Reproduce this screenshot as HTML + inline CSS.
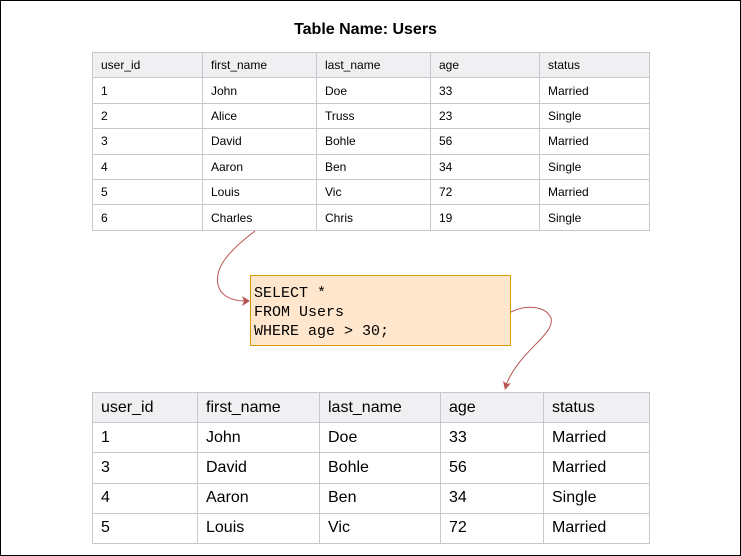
<!DOCTYPE html>
<html><head><style>
body{margin:0;width:741px;height:556px;position:relative;background:#fff;font-family:"Liberation Sans",Arial,sans-serif;overflow:hidden}
.frame{position:absolute;left:0;top:0;width:739px;height:554px;border:1px solid #000}
h1{position:absolute;top:21px;left:0;width:731px;text-align:center;margin:0;font-size:16px;font-weight:bold}
table{position:absolute;border-collapse:collapse;color:#000}
td{border:1px solid #c8c8cc;padding:0 0 0 8px;vertical-align:middle}
tr:first-child td{background:#f0f0f2}
#t1{left:92px;top:52px;font-size:12px}
#t1 td{height:24.4px}
#t2{left:92px;top:392px;font-size:16px}
#t2 td{height:29.2px}
.box{position:absolute;left:250px;top:275px;background:#ffe6cc;border:1px solid #d79b00;font-family:"Liberation Mono",monospace;font-size:15px;line-height:19px;padding:8px 0 0 3px;box-sizing:border-box;width:261px;height:71px}
svg{position:absolute;left:0;top:0}
</style></head><body>
<div class="frame"></div>
<h1>Table Name: Users</h1>
<table id="t1">
<tr><td style="width:101px">user_id</td><td style="width:105px">first_name</td><td style="width:105px">last_name</td><td style="width:100px">age</td><td style="width:101px">status</td></tr>
<tr><td>1</td><td>John</td><td>Doe</td><td>33</td><td>Married</td></tr>
<tr><td>2</td><td>Alice</td><td>Truss</td><td>23</td><td>Single</td></tr>
<tr><td>3</td><td>David</td><td>Bohle</td><td>56</td><td>Married</td></tr>
<tr><td>4</td><td>Aaron</td><td>Ben</td><td>34</td><td>Single</td></tr>
<tr><td>5</td><td>Louis</td><td>Vic</td><td>72</td><td>Married</td></tr>
<tr><td>6</td><td>Charles</td><td>Chris</td><td>19</td><td>Single</td></tr>
</table>
<div class="box">SELECT *<br>FROM Users<br>WHERE age &gt; 30;</div>
<svg width="741" height="556">
<path d="M255 231 C230 250 210 270 220 290 C225 298 235 301 246 301" fill="none" stroke="#b85450" stroke-width="1"/>
<path d="M250 301 L242 296 L244 301 L242 306 Z" fill="#b85450"/>
<path d="M511 312 C525 305 545 305 551 318 C555 335 520 350 506 385" fill="none" stroke="#b85450" stroke-width="1"/>
<path d="M505 390 L503 381 L507 384 L511 383 Z" fill="#b85450"/>
</svg>
<table id="t2">
<tr><td style="width:96px">user_id</td><td style="width:113px">first_name</td><td style="width:112px">last_name</td><td style="width:94px">age</td><td style="width:97px">status</td></tr>
<tr><td>1</td><td>John</td><td>Doe</td><td>33</td><td>Married</td></tr>
<tr><td>3</td><td>David</td><td>Bohle</td><td>56</td><td>Married</td></tr>
<tr><td>4</td><td>Aaron</td><td>Ben</td><td>34</td><td>Single</td></tr>
<tr><td>5</td><td>Louis</td><td>Vic</td><td>72</td><td>Married</td></tr>
</table>
</body></html>
